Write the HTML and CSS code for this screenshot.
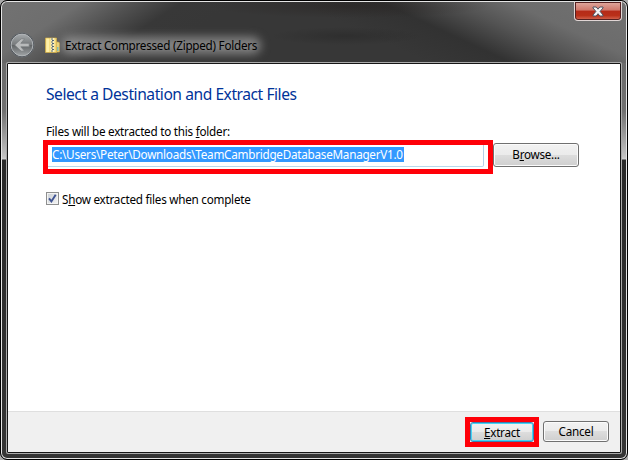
FILE: index.html
```html
<!DOCTYPE html>
<html lang="en">
<head>
<meta charset="utf-8">
<title>Extract Compressed (Zipped) Folders</title>
<link rel="stylesheet" href="styles.css">
</head>
<body>
<div class="window">
  <header class="titlebar">
    <svg class="back" width="26" height="26" viewBox="0 0 26 26">
      <defs>
        <linearGradient id="orb" x1="0" y1="0" x2="0" y2="1"><stop offset="0" stop-color="#a5a9ac"/><stop offset=".48" stop-color="#777a7c"/><stop offset=".52" stop-color="#626567"/><stop offset="1" stop-color="#a0a4a6"/></linearGradient>
      </defs>
      <circle cx="13" cy="13" r="12.2" fill="#3d4146" stroke="#777b80" stroke-width=".7"/>
      <circle cx="13" cy="13" r="10.9" fill="url(#orb)" stroke="#b3b7ba" stroke-width="1"/>
      <path d="M5.700 13 12.200 6.800h3.400L11.800 11.300h8.400v3.500h-8.400l3.800 4.400h-3.400z" fill="#b8babb" stroke="#777b7e" stroke-width=".7"/>
    </svg>
    <svg class="zip" width="15" height="16" viewBox="0 0 15 16">
      <path d="M10.500 5h3l1 1v9h-4z" fill="#f2d978" stroke="#cda43c" stroke-width=".7"/>
      <path d="M.5 1h11v14.500H.5z" fill="#f5d974" stroke="#d4af48" stroke-width=".7"/>
      <path d="M1.300 1.500h3v13.500h-3z" fill="#fff0a8"/>
      <path d="M5.500 1h4v14h-4z" fill="#fff3bd"/>
      <path d="M6 2h2M7 3.500h2M6 5h2M7 6.500h2M6 8h2M7 9.500h2M6 11h2M7 12.500h2M6 14h2" stroke="#4f6478" stroke-width="1.200"/>
      <path d="M12.800 10v4" stroke="#61b9c5" stroke-width="1.200"/>
    </svg>
    <span class="caption">Extract Compressed (Zipped) Folders</span>
    <div class="close">
      <svg width="12" height="11" viewBox="0 0 12 11">
        <path d="M1 1h3.200L6 3.200 7.800 1H11v1L8.100 5.400 11 9v1H7.800L6 7.700 4.200 10H1V9l2.900-3.600L1 2z" fill="#f5f5f5" stroke="#4d5261" stroke-width="1"/>
      </svg>
    </div>
  </header>
  <main class="client">
    <section class="content">
      <h1>Select a Destination and Extract Files</h1>
      <label class="prompt">Files will be extracted to this <u>f</u>older:</label>
      <div class="row">
        <div class="mark path-mark"><div class="field"><span class="selected">C:\Users\Peter\Downloads\TeamCambridgeDatabaseManagerV1.0</span></div></div>
        <button class="btn browse"><span>B<u>r</u>owse...</span></button>
      </div>
      <div class="option">
        <span class="check"><svg width="9" height="9" viewBox="0 0 9 9"><path d="M1 4.300 3.400 7.400 7.700.8" fill="none" stroke="#3f5392" stroke-width="1.900"/></svg></span>
        <span class="option-text">S<u>h</u>ow extracted files when complete</span>
      </div>
    </section>
    <footer class="footer">
      <div class="mark extract-mark"><button class="btn extract"><span><u>E</u>xtract</span></button></div>
      <button class="btn cancel"><span>Cancel</span></button>
    </footer>
  </main>
</div>
</body>
</html>
```
FILE: styles.css
```css
* { box-sizing: border-box; }
body { margin: 0; width: 628px; height: 460px; overflow: hidden; background: #aaa; font: 11.7px/16px "Noto Sans", "Open Sans", sans-serif; color: #000; }
.window {
  width: 628px; height: 460px; border: 1px solid #000; border-radius: 7px; padding: 0 5px 5px;
  box-shadow: inset 0 0 0 1px #e5e5e5;
  background:
    radial-gradient(ellipse 75px 9px, rgba(30,30,30,.35), rgba(30,30,30,0)) 270px 22px / 150px 26px no-repeat,
    radial-gradient(ellipse 140px 12px, rgba(34,28,26,.4), rgba(34,28,26,0)) 210px -8px / 280px 26px no-repeat,
    linear-gradient(205deg, #727272 0, #6c6c6c 50px, #545454 75px, #323232 105px, rgba(50,50,50,0) 140px) right top / 350px 62px no-repeat,
    linear-gradient(147deg, #727272 0, #6e6e6e 45px, #505050 75px, #383838 100px, rgba(55,55,55,0) 130px) left top / 400px 62px no-repeat,
    linear-gradient(#373737, #373737) left top / 100% 62px no-repeat,
    linear-gradient(#6b6b6b 62px, #707070 110px, #c3c3c3 156px, #d0d0d0 158px, #292929 159px, #353535 100%);
}
.titlebar { height: 61px; display: flex; align-items: flex-start; }
.back { margin: 31px 0 0 3px; }
.zip { margin: 36px 0 0 10px; }
.caption { position: relative; z-index: 0; margin: 36px 0 0 5px; white-space: nowrap; letter-spacing: -.25px; }
.caption::before { content: ""; position: absolute; z-index: -1; inset: 0 -4px -1px; border-radius: 10px; background: rgba(165,165,165,.7); filter: blur(5px); }
.close {
  width: 48px; height: 20px; margin-left: auto; margin-right: 0; display: flex; align-items: center; justify-content: center;
  border: 1px solid #e1d6d5; border-top-color: #ddd; border-radius: 0 0 4px 4px;
  box-shadow: inset 0 0 0 1px #552020;
  background: linear-gradient(#e0aaa0 0, #cf7669 46%, #b52a18 49%, #b93019 75%, #d66b56 100%);
}
.client { height: 390px; border: 1px solid #161616; box-shadow: 0 0 0 1px #aaa; border-radius: 1px; margin: 1px 1px 0; display: flex; flex-direction: column; background: #fff; }
.content { flex: 1; padding: 19px 0 0 35px; }
h1 { margin: 0 0 0 3px; height: 25px; font-size: 15.6px; line-height: 22px; font-weight: 400; color: #039; letter-spacing: -.45px; white-space: nowrap; }
.prompt { display: block; margin: 15px 0 0 3px; height: 17px; letter-spacing: -.24px; white-space: nowrap; }
u { text-decoration-thickness: 1px; text-underline-offset: 1px; text-decoration-skip-ink: none; }
.row { display: flex; align-items: flex-start; height: 34px; }
.mark { border: 5px solid #ff0008; }
.path-mark { width: 450px; height: 34px; }
.field { width: 436px; height: 22px; border-right: 1px solid #b5cfe7; border-bottom: 1px solid #b7d9ed; border-radius: 0 0 2px; padding: 2px 0 0 4px; }
.selected { display: block; width: 352px; height: 15px; line-height: 15px; background: #39f; color: #fff; white-space: nowrap; letter-spacing: -.25px; }
.btn { font: inherit; color: #000; padding: 0; margin: 0; border: 1px solid #707070; border-radius: 3px; text-align: center; letter-spacing: -.27px; box-shadow: inset 0 0 0 1px #fbfbfb; background: linear-gradient(#f2f2f2, #ebebeb 49%, #ddd 50%, #cfcfcf); }
.browse { width: 86px; height: 24px; margin-top: 3px; line-height: 20px; padding-bottom: 2px; }
.option { display: flex; margin: 17px 0 0 3px; }
.check { width: 13px; height: 13px; margin-top: 1px; border: 1px solid #8e8f8f; box-shadow: inset 0 0 0 1px #f4f4f4; background: linear-gradient(135deg, #cbd0d5, #f4f4f4); display: flex; align-items: center; justify-content: center; }
.option-text { margin-left: 3px; letter-spacing: -.25px; white-space: nowrap; }
.footer { height: 41px; border-top: 1px solid #dfdfdf; background: #f0f0f0; display: flex; justify-content: flex-end; padding: 5px 11px 0 0; }
.extract-mark { width: 74px; height: 30px; margin-right: 4px; }
.extract { display: block; width: 64px; height: 20px; line-height: 16px; border-color: #3c7fb1; box-shadow: inset 0 0 0 1px #44d5f5; }
.cancel { width: 66px; height: 21px; margin-top: 4px; line-height: 17px; }
```
